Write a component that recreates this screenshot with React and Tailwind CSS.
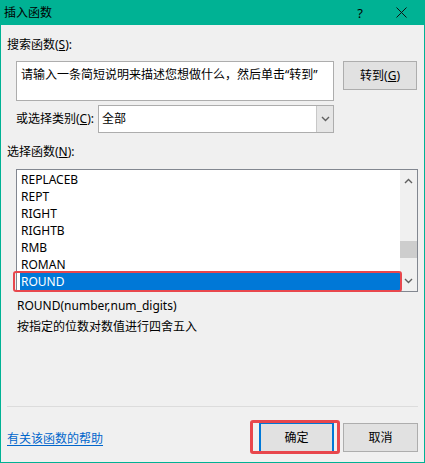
import React from "react";

const font = { fontFamily: '"Noto Sans", "Noto Sans CJK SC", sans-serif' };

function Chevron({ up }) {
  return (
    <svg width="9" height="6" viewBox="0 0 9 6" className="block">
      <path
        d={up ? "M1 5 L4.5 1.5 L8 5" : "M1 1 L4.5 4.5 L8 1"}
        fill="none"
        stroke="#606060"
        strokeWidth="1.4"
      />
    </svg>
  );
}

const items = ["REPLACEB", "REPT", "RIGHT", "RIGHTB", "RMB", "ROMAN", "ROUND"];

export default function App() {
  return (
    <div
      className="w-[425px] h-[463px] flex flex-col bg-[#00b294] px-[1px] pb-[1px] text-[12px] leading-[16px] text-black"
      style={font}
    >
      {/* Title bar */}
      <div className="h-[25px] flex items-center pl-[3px] text-[12px] text-black shrink-0">
        <span className="pt-[1px]">插入函数</span>
        <div className="ml-auto flex items-center">
          <span className="w-[20px] text-center text-[13px] mr-[26px]">?</span>
          <svg width="11" height="11" viewBox="0 0 11 11" className="mr-[17px]">
            <path d="M0.5 0.5 L10.5 10.5 M10.5 0.5 L0.5 10.5" stroke="#111" strokeWidth="1" fill="none" />
          </svg>
        </div>
      </div>

      {/* Body */}
      <div className="relative flex-1 bg-[#f0f0f0] flex flex-col pl-[6px] pr-[6px]">
        <div className="mt-[12px] h-[16px]">
          搜索函数(<u>S</u>):
        </div>

        <div className="mt-[8px] flex ml-[9px] gap-[9px]">
          <div className="w-[318px] h-[40px] bg-white border border-[#adadad] pl-[4px] pt-[5px] whitespace-nowrap">
            请输入一条简短说明来描述您想做什么，然后单击“转到”
          </div>
          <div className="w-[74px] h-[29px] bg-[#e1e1e1] border border-[#adadad] flex items-center justify-center">
            转到(<u>G</u>)
          </div>
        </div>

        <div className="mt-[4px] flex items-center ml-[9px]">
          <span className="w-[82px]">
            或选择类别(<u>C</u>):
          </span>
          <div className="w-[236px] h-[28px] bg-white border border-[#adadad] flex items-stretch">
            <span className="flex-1 flex items-center pl-[3px]">全部</span>
            <div className="w-[17px] bg-[#e6e6e6] border-l border-[#c8c8c8] flex items-center justify-center">
              <Chevron />
            </div>
          </div>
        </div>

        <div className="mt-[11px] h-[16px]">
          选择函数(<u>N</u>):
        </div>

        <div className="mt-[9px] ml-[9px] w-[402px] h-[123px] bg-white border border-[#828790] flex">
          <div className="flex-1 pt-[1px] pl-[3px]">
            {items.map((it) => (
              <div
                key={it}
                className={
                  "h-[17px] flex items-center pl-[1px] " +
                  (it === "ROUND" ? "bg-[#0078d7] text-white" : "")
                }
              >
                {it}
              </div>
            ))}
          </div>
          <div className="w-[17px] bg-[#f0f0f0] flex flex-col items-center">
            <div className="h-[20px] flex items-center justify-center mt-[1px]">
              <Chevron up />
            </div>
            <div className="mt-[50px] w-[17px] h-[17px] bg-[#cdcdcd]" />
            <div className="mt-auto h-[20px] flex items-center justify-center">
              <Chevron />
            </div>
          </div>
        </div>

        <div className="mt-[6px] ml-[10px] h-[16px]">ROUND(number,num_digits)</div>
        <div className="mt-[5px] ml-[10px] h-[16px]">按指定的位数对数值进行四舍五入</div>

        <div className="mt-auto border-t border-[#dcdcdc] mb-[16px]" />

        <div className="flex items-center mb-[10px]">
          <a className="text-[#0066cc] underline underline-offset-2 mt-[2px]">有关该函数的帮助</a>
          <div className="ml-auto flex gap-[9px]">
            <div className="w-[75px] h-[29px] bg-[#e1e1e1] border border-[#0078d7] shadow-[inset_1px_0_0_#0078d7,inset_-1px_0_0_#0078d7] flex items-center justify-center">
              确定
            </div>
            <div className="w-[75px] h-[29px] bg-[#e1e1e1] border border-[#adadad] flex items-center justify-center">
              取消
            </div>
          </div>
        </div>

        {/* Annotation outlines */}
        <div className="absolute left-[12px] top-[246px] w-[389px] h-[21px] border-2 border-[#e8474d] rounded-[3px]" />
        <div className="absolute left-[249px] top-[395px] w-[90px] h-[34px] border-[3px] border-[#e8474d] rounded-[3px]" />
      </div>
    </div>
  );
}
